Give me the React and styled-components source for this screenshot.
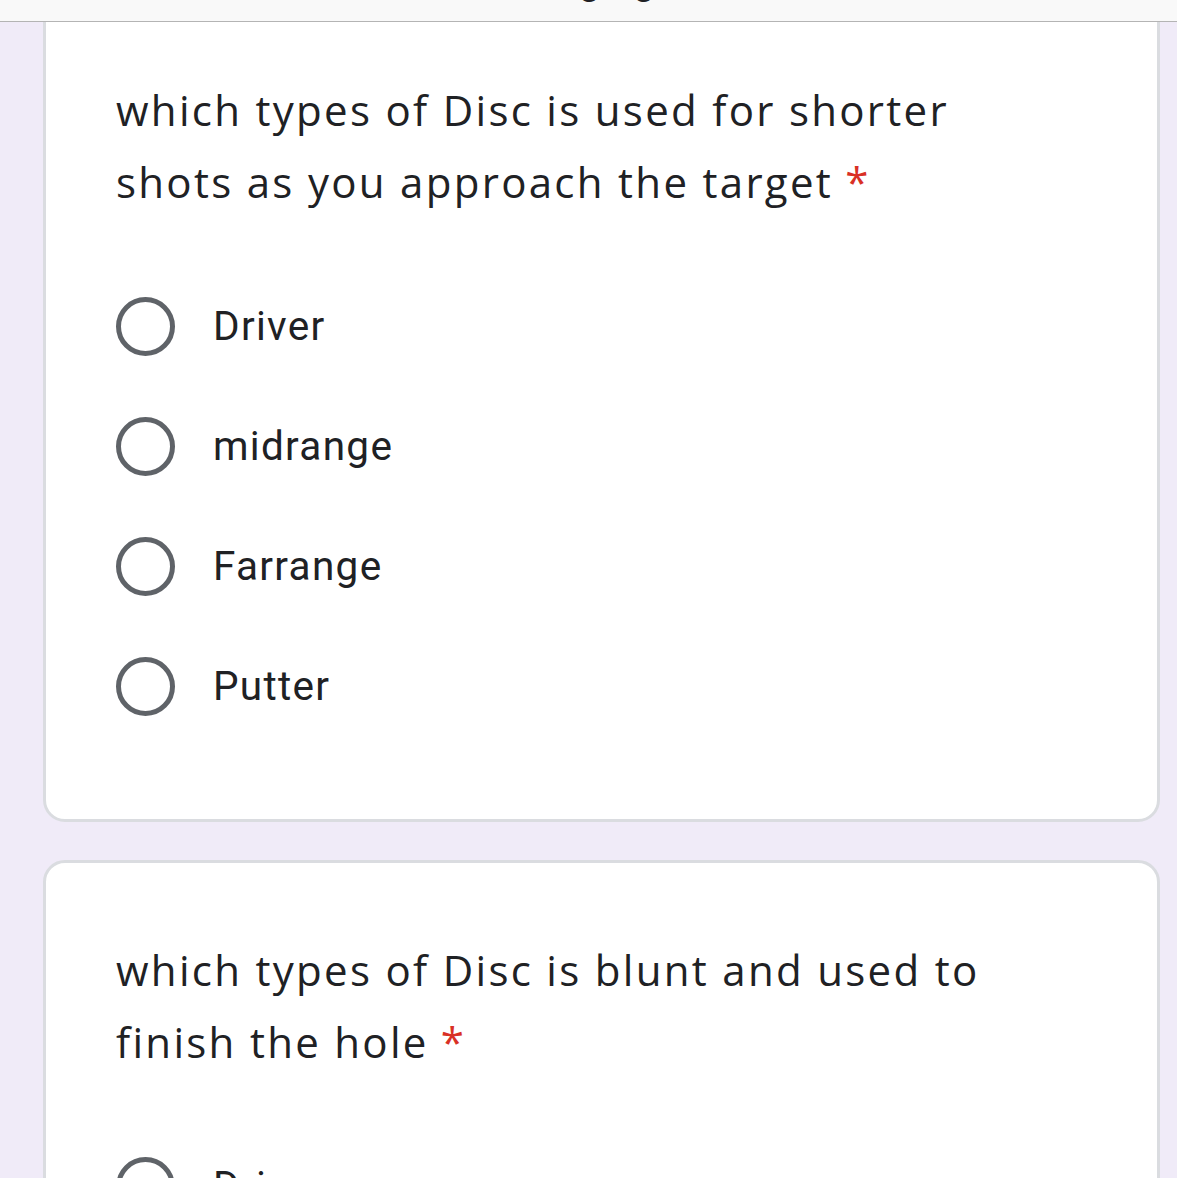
import React from 'react';
import styled, { createGlobalStyle } from 'styled-components';

// Questions shown on the page
const questions = [
  {
    title: 'which types of Disc is used for shorter shots as you approach the target',
    options: ['Driver', 'midrange', 'Farrange', 'Putter'],
  },
  {
    title: 'which types of Disc is blunt and used to finish the hole',
    options: ['Driver', 'midrange', 'Farrange', 'Putter'],
  },
];

const GlobalStyle = createGlobalStyle`
  html, body {
    margin: 0;
    padding: 0;
    background: #f0ebf8;
    overflow: hidden;
  }
  * {
    box-sizing: border-box;
  }
`;

// Browser title bar, only the bottom of its text peeks out
const TopBar = styled.header`
  position: fixed;
  top: 0;
  left: 0;
  right: 0;
  height: 22px;
  background: #f9f9f9;
  border-bottom: 1px solid #b4b4b4;
  overflow: hidden;
  z-index: 10;
  display: flex;
  justify-content: center;
`;

const TopTitle = styled.div`
  margin-top: -43px;
  padding-right: 12px;
  font-family: Roboto, 'Liberation Sans', sans-serif;
  font-size: 40px;
  line-height: 47px;
  color: #202124;
  white-space: nowrap;
`;

const Page = styled.main`
  display: flex;
  flex-direction: column;
  gap: 38px;
  padding: 0 17px 0 43px;
`;

const Card = styled.section`
  background: #fff;
  border: 3px solid #dadce0;
  border-radius: 22px;
  padding: 71px 70px 73px;
  display: flex;
  flex-direction: column;
  gap: 48px;
`;

const Question = styled.div`
  max-width: 900px;
  font-family: 'Open Sans', Roboto, sans-serif;
  font-size: 42px;
  line-height: 72px;
  color: #202124;
  letter-spacing: 2.3px;
`;

const Required = styled.span`
  color: #d93025;
  padding-left: 12px;
`;

const Options = styled.div`
  display: flex;
  flex-direction: column;
`;

const Option = styled.label`
  display: flex;
  align-items: center;
  height: 120px;
  gap: 38px;
  font-family: Roboto, 'Liberation Sans', sans-serif;
  font-size: 40.5px;
  letter-spacing: 1.3px;
  color: #202124;
`;

const Radio = styled.span`
  width: 59px;
  height: 59px;
  border: 5.5px solid #5f6368;
  border-radius: 50%;
  flex-shrink: 0;
`;

const App = () => (
  <>
    <GlobalStyle />
    <TopBar>
      <TopTitle>Ranging</TopTitle>
    </TopBar>
    <Page>
      {questions.map((q, i) => (
        <Card key={i}>
          <Question>
            {q.title}
            <Required>*</Required>
          </Question>
          <Options>
            {q.options.map((opt) => (
              <Option key={opt}>
                <Radio />
                {opt}
              </Option>
            ))}
          </Options>
        </Card>
      ))}
    </Page>
  </>
);

export default App;
